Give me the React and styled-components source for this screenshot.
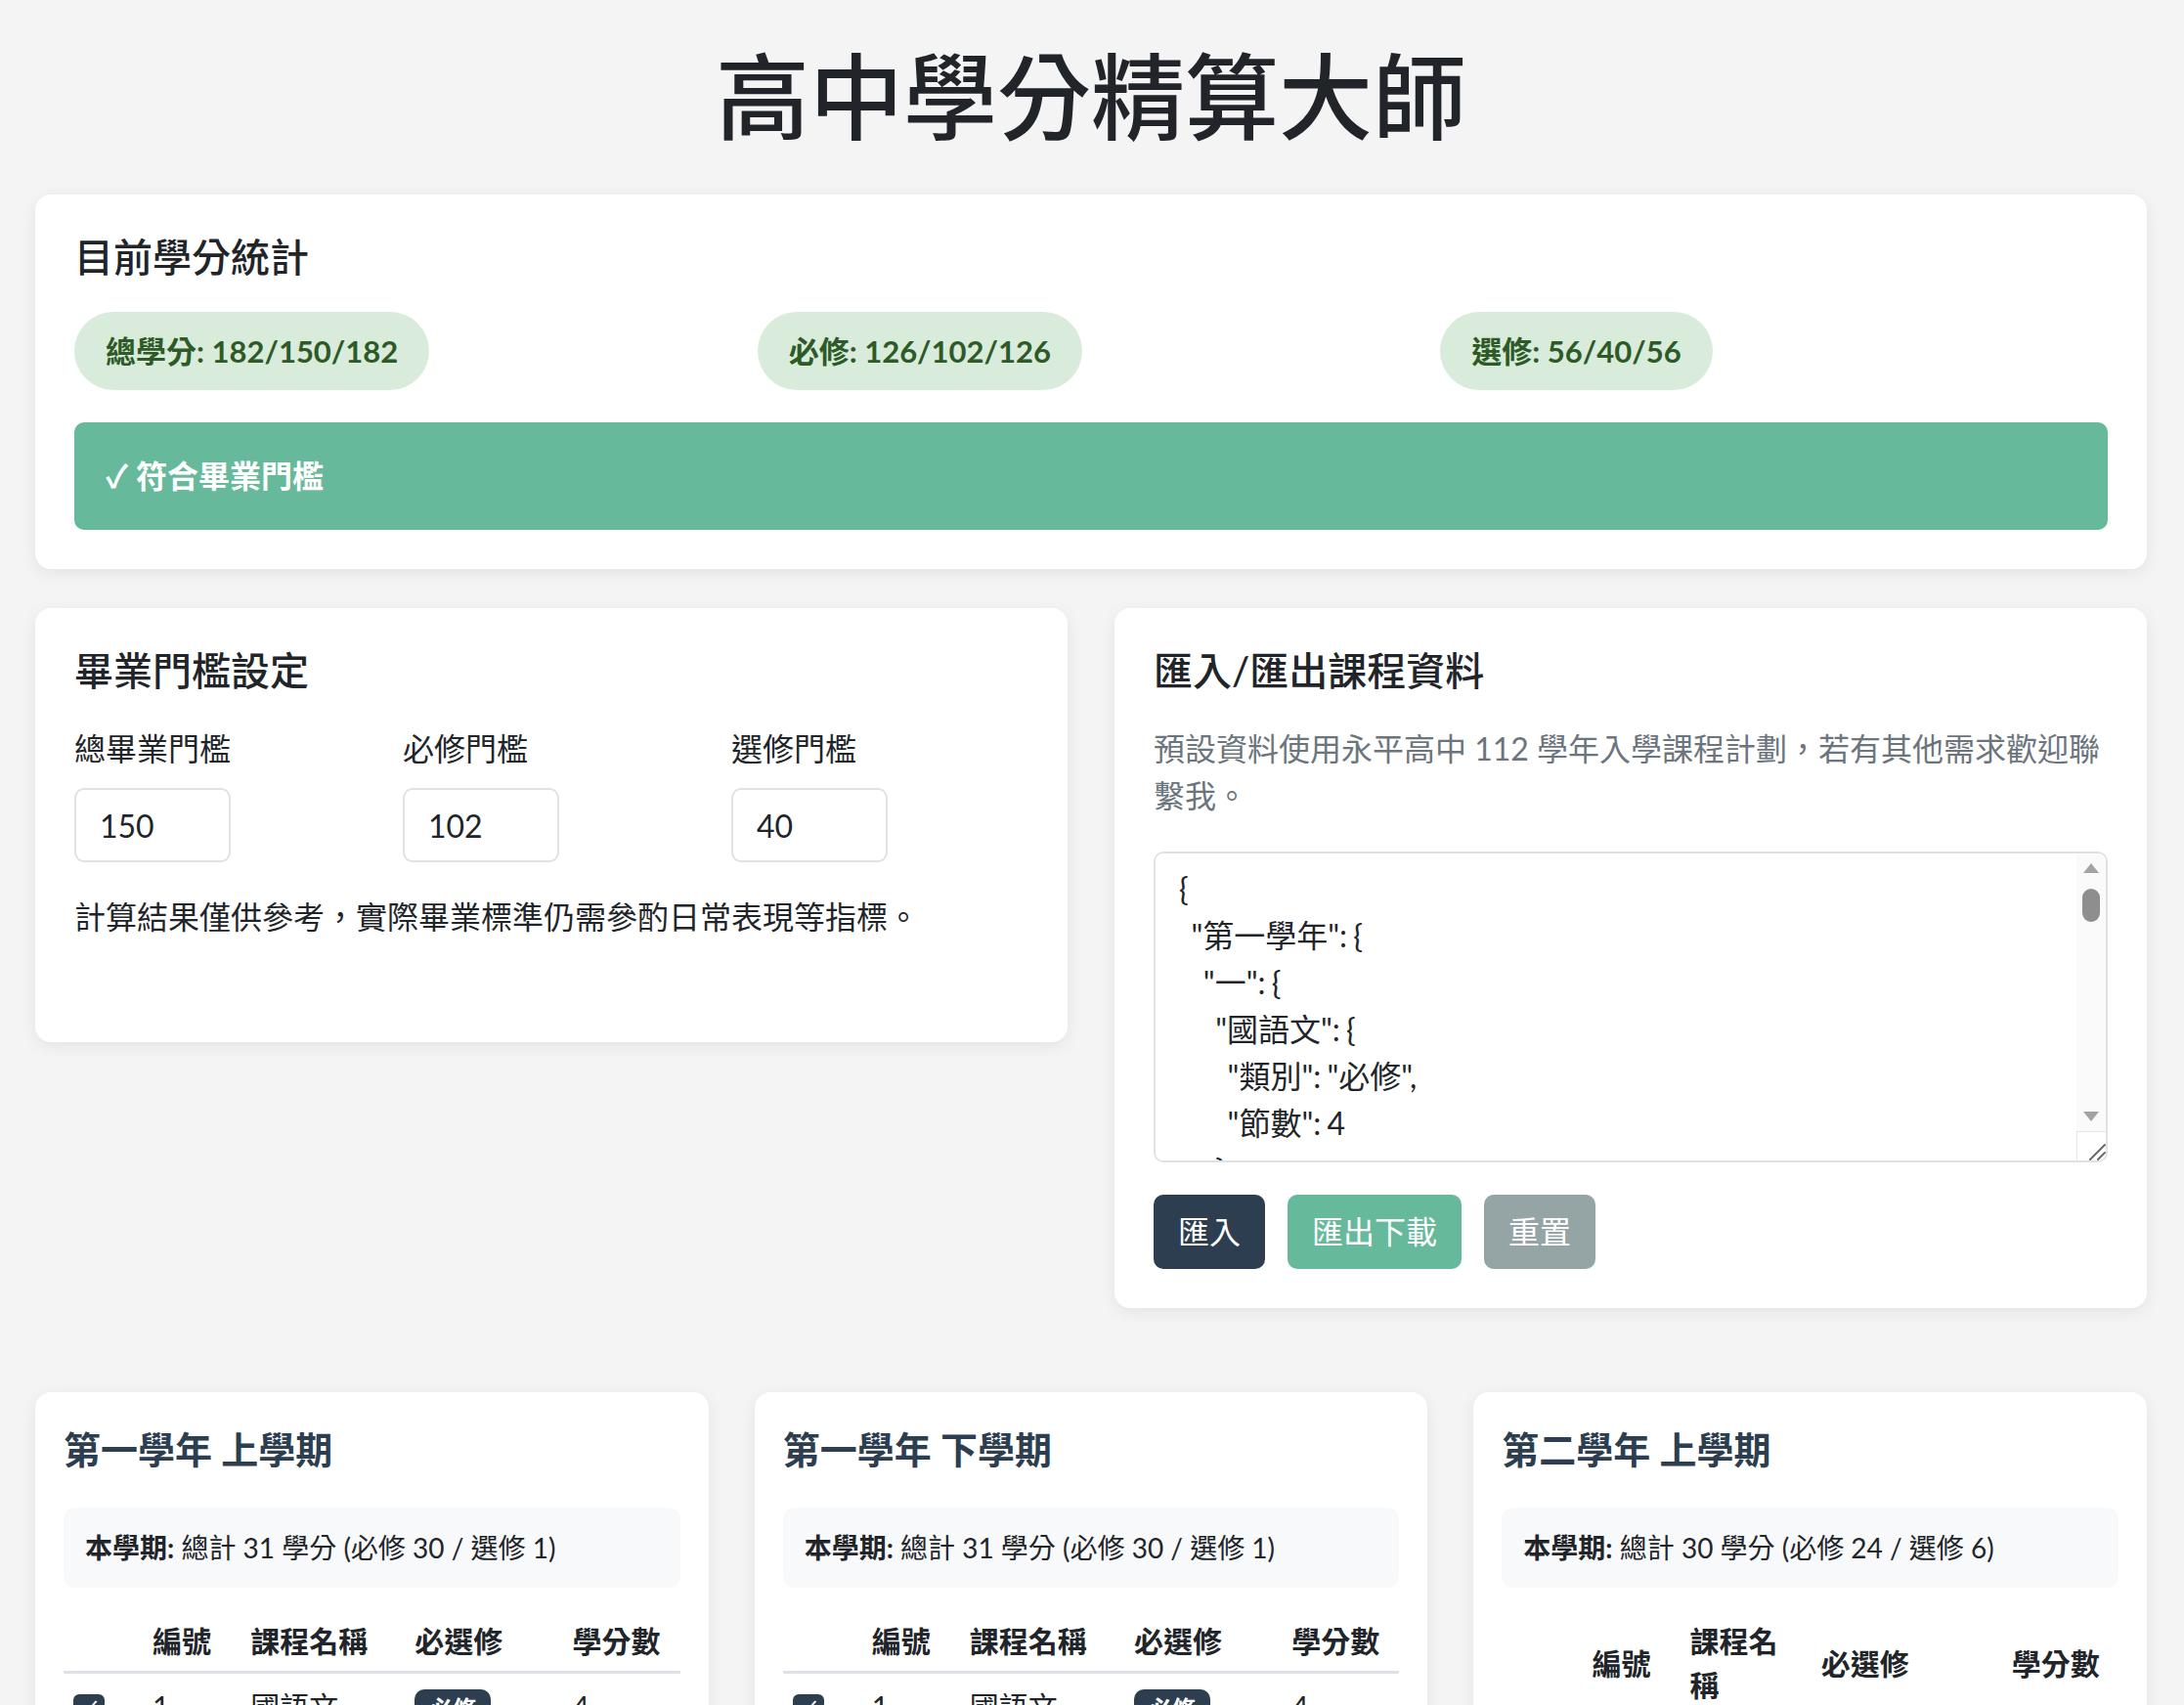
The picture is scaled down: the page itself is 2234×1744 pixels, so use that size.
import React from "react";
import styled, { createGlobalStyle } from "styled-components";

const GlobalStyle = createGlobalStyle`
  html { scrollbar-width: none; }
  body {
    margin: 0;
    background: #f4f4f4;
    font-family: Lato, "Noto Sans CJK TC", sans-serif;
    color: #212529;
  }
`;

const C = (name, type, credits) => ({ name, type, credits });

const semesters = [
  {
    year: "第一學年", term: "一", label: "第一學年 上學期", cols: [79, 100, 168, 161, 122],
    courses: [
      C("國語文", "必修", 4), C("英語文", "必修", 4), C("數學", "必修", 4), C("歷史", "必修", 2),
      C("地理", "必修", 2), C("公民與社會", "必修", 2), C("物理", "必修", 2), C("生物", "必修", 2),
      C("音樂", "必修", 1), C("美術", "必修", 1), C("生活科技", "必修", 2), C("體育", "必修", 2),
      C("健康與護理", "必修", 1), C("全民國防教育", "必修", 1), C("多元選修", "選修", 1),
    ],
  },
  {
    year: "第一學年", term: "二", label: "第一學年 下學期", cols: [79, 100, 168, 161, 122],
    courses: [
      C("國語文", "必修", 4), C("英語文", "必修", 4), C("數學", "必修", 4), C("歷史", "必修", 2),
      C("地理", "必修", 2), C("公民與社會", "必修", 2), C("化學", "必修", 2), C("地球科學", "必修", 2),
      C("音樂", "必修", 1), C("美術", "必修", 1), C("資訊科技", "必修", 2), C("體育", "必修", 2),
      C("健康與護理", "必修", 1), C("全民國防教育", "必修", 1), C("多元選修", "選修", 1),
    ],
  },
  {
    year: "第二學年", term: "一", label: "第二學年 上學期", cols: [80, 100, 134, 195, 121],
    courses: [
      C("國語文", "必修", 4), C("英語文", "必修", 4), C("數學", "必修", 4), C("歷史", "必修", 2),
      C("地理", "必修", 2), C("公民與社會", "必修", 2), C("藝術生活", "必修", 1), C("家政", "必修", 1),
      C("體育", "必修", 2), C("生命教育", "必修", 1), C("生涯規劃", "必修", 1),
      C("英文作文", "選修", 2), C("選修物理－力學一", "選修", 2), C("選修化學－物質與能量", "選修", 2),
    ],
  },
  {
    year: "第二學年", term: "二", label: "第二學年 下學期", cols: [80, 100, 134, 195, 121],
    courses: [
      C("國語文", "必修", 4), C("英語文", "必修", 4), C("數學", "必修", 4), C("歷史", "必修", 2),
      C("地理", "必修", 2), C("公民與社會", "必修", 2), C("藝術生活", "必修", 1), C("家政", "必修", 1),
      C("體育", "必修", 2), C("生命教育", "必修", 1), C("生涯規劃", "必修", 1),
      C("英語聽講", "選修", 2), C("選修物理－力學二", "選修", 2), C("選修生物－細胞與遺傳", "選修", 2),
    ],
  },
  {
    year: "第三學年", term: "一", label: "第三學年 上學期", cols: [80, 100, 134, 195, 121],
    courses: [
      C("國語文", "必修", 4), C("英語文", "必修", 4), C("體育", "必修", 2),
      C("數學甲", "選修", 4), C("選修物理－電磁現象一", "選修", 2), C("選修化學－化學反應與平衡", "選修", 4),
      C("國學常識", "選修", 2), C("英文閱讀與寫作", "選修", 2), C("探究與實作", "選修", 2), C("多元選修", "選修", 4),
    ],
  },
  {
    year: "第三學年", term: "二", label: "第三學年 下學期", cols: [80, 100, 134, 195, 121],
    courses: [
      C("國語文", "必修", 4), C("英語文", "必修", 2), C("體育", "必修", 2),
      C("數學甲", "選修", 4), C("選修物理－電磁現象二", "選修", 4), C("選修生物－生態與演化", "選修", 4),
      C("各類文學選讀", "選修", 2), C("英語會話", "選修", 2), C("專題研究", "選修", 2), C("多元選修", "選修", 4),
    ],
  },
];

const jsonData = {};
semesters.forEach((s) => {
  jsonData[s.year] = jsonData[s.year] || {};
  const t = {};
  s.courses.forEach((c) => {
    t[c.name] = { 類別: c.type, 節數: c.credits };
  });
  jsonData[s.year][s.term] = t;
});
const jsonText = JSON.stringify(jsonData, null, 2);

const Page = styled.div`
  padding: 40px 38px 80px 36px;
`;

const Title = styled.h1`
  margin: 0 0 44px;
  text-align: center;
  font-size: 96px;
  line-height: 115px;
  font-weight: 500;
  color: #212529;
`;

const Card = styled.section`
  background: #fff;
  border-radius: 16px;
  box-shadow: 0 4px 16px rgba(0, 0, 0, 0.07);
  padding: 40px;
`;

const CardTitle = styled.h2`
  margin: 0 0 32px;
  font-size: 40px;
  line-height: 48px;
  font-weight: 500;
  color: #212529;
`;

const StatGrid = styled.div`
  display: grid;
  grid-template-columns: repeat(3, 1fr);
  gap: 16px;
`;

const Pill = styled.div`
  justify-self: start;
  background: #d9ecdb;
  color: #2d5a27;
  font-weight: 700;
  font-size: 31px;
  line-height: 48px;
  padding: 16px 32px;
  border-radius: 40px;
`;

const Banner = styled.div`
  margin-top: 33px;
  background: #67b99c;
  color: #fff;
  font-weight: 700;
  font-size: 32px;
  line-height: 48px;
  padding: 31px 32px;
  border-radius: 10px;
`;

const TwoCols = styled.div`
  display: grid;
  grid-template-columns: 1fr 1fr;
  gap: 48px;
  margin-top: 40px;
  align-items: start;
`;

const FieldGrid = styled.div`
  display: grid;
  grid-template-columns: repeat(3, 1fr);
  gap: 32px;
`;

const Label = styled.label`
  display: block;
  font-size: 32px;
  line-height: 48px;
  margin-bottom: 16px;
`;

const NumberInput = styled.input`
  box-sizing: border-box;
  width: 160px;
  height: 76px;
  padding: 0 24px;
  font-family: Lato, "Noto Sans CJK TC", sans-serif;
  font-size: 32px;
  color: #212529;
  border: 2px solid #dee2e6;
  border-radius: 10px;
  background: #fff;
  outline: none;
`;

const Note = styled.p`
  margin: 32px 0 64px;
  font-size: 32px;
  line-height: 48px;
`;

const Desc = styled.p`
  margin: 0 0 33px;
  color: #6c757d;
  font-size: 32px;
  line-height: 48px;
`;

const AreaWrap = styled.div`
  position: relative;
`;

const JsonArea = styled.textarea`
  display: block;
  box-sizing: border-box;
  width: 100%;
  height: 318px;
  padding: 12px 56px 12px 24px;
  border: 2px solid #dee2e6;
  border-radius: 10px;
  font-family: Lato, "Noto Sans CJK TC", sans-serif;
  font-size: 32px;
  line-height: 48px;
  word-spacing: -2px;
  color: #212529;
  background: #fff;
  resize: none;
  outline: none;
`;

const FakeScrollbar = styled.div`
  position: absolute;
  top: 2px;
  right: 2px;
  bottom: 2px;
  width: 30px;
  display: flex;
  flex-direction: column;
  background: #fafafa;
  border-radius: 0 8px 8px 0;
  overflow: hidden;
  pointer-events: none;
`;

const ArrowBox = styled.div`
  height: 30px;
  flex: none;
  display: flex;
  align-items: center;
  justify-content: center;
`;

const Arrow = styled.span`
  width: 0;
  height: 0;
  border-left: 8px solid transparent;
  border-right: 8px solid transparent;
  ${(p) => (p.$down ? "border-top: 10px solid #a3a3a3;" : "border-bottom: 10px solid #a3a3a3;")}
`;

const Track = styled.div`
  flex: 1;
  display: flex;
  justify-content: center;
  padding-top: 6px;
`;

const Thumb = styled.div`
  width: 18px;
  height: 34px;
  border-radius: 9px;
  background: #8e8e8e;
`;

const Corner = styled.div`
  height: 30px;
  flex: none;
  box-sizing: border-box;
  background: #fff;
  border-left: 1px solid #e6e6e6;
  border-top: 1px solid #e6e6e6;
  display: flex;
  align-items: flex-end;
  justify-content: flex-end;
`;

const ButtonRow = styled.div`
  display: flex;
  gap: 23px;
  margin-top: 33px;
`;

const Button = styled.button`
  font-family: Lato, "Noto Sans CJK TC", sans-serif;
  font-size: 32px;
  line-height: 48px;
  padding: 14px 25px;
  border: none;
  border-radius: 10px;
  color: #fff;
  background: ${(p) => p.$bg};
  cursor: pointer;
`;

const SemesterGrid = styled.div`
  display: grid;
  grid-template-columns: repeat(3, 1fr);
  gap: 47px;
  margin-top: 86px;
`;

const SemesterCard = styled(Card)`
  padding: 35px 29px 32px;
`;

const SemTitle = styled.h3`
  margin: 0 0 37px;
  font-size: 38px;
  line-height: 46px;
  font-weight: 700;
  color: #2c3e50;
`;

const Summary = styled.div`
  background: #f8f9fa;
  border-radius: 12px;
  padding: 20px 22px;
  font-size: 28px;
  line-height: 42px;
  color: #212529;

  strong {
    font-weight: 700;
  }
`;

const Table = styled.table`
  width: 100%;
  margin-top: 24px;
  border-collapse: collapse;
  table-layout: fixed;
`;

const Th = styled.th`
  text-align: left;
  font-size: 30px;
  line-height: 45px;
  font-weight: 700;
  padding: 8px 12px;
  border-bottom: 3px solid #dee2e6;
  vertical-align: middle;
  color: #212529;
`;

const Td = styled.td`
  font-size: 30px;
  line-height: 45px;
  padding: 11px 12px;
  border-bottom: 2px solid #eef0f2;
  vertical-align: middle;
  color: #212529;
`;

const CheckBox = styled.span`
  display: inline-flex;
  align-items: center;
  justify-content: center;
  width: 32px;
  height: 32px;
  margin-left: -2px;
  border-radius: 6px;
  background: #2c3e50;
  color: #fff;
  font-size: 24px;
  line-height: 1;
  vertical-align: middle;
`;

const Badge = styled.span`
  display: inline-block;
  padding: 2px 15px;
  border-radius: 10px;
  font-size: 24px;
  line-height: 36px;
  font-weight: 700;
  color: #fff;
  background: ${(p) => (p.$elective ? "#67b99c" : "#2c3e50")};
`;

function SemesterPanel({ sem }) {
  const req = sem.courses.filter((c) => c.type === "必修").reduce((a, c) => a + c.credits, 0);
  const ele = sem.courses.filter((c) => c.type === "選修").reduce((a, c) => a + c.credits, 0);
  return (
    <SemesterCard>
      <SemTitle>{sem.label}</SemTitle>
      <Summary>
        <strong>本學期:</strong> 總計 {req + ele} 學分 (必修 {req} / 選修 {ele})
      </Summary>
      <Table>
        <colgroup>
          {sem.cols.map((w, i) => (
            <col key={i} style={{ width: w }} />
          ))}
        </colgroup>
        <thead>
          <tr>
            <Th></Th>
            <Th>編號</Th>
            <Th>課程名稱</Th>
            <Th>必選修</Th>
            <Th>學分數</Th>
          </tr>
        </thead>
        <tbody>
          {sem.courses.map((c, i) => (
            <tr key={c.name + i}>
              <Td>
                <CheckBox>✓</CheckBox>
              </Td>
              <Td>{i + 1}</Td>
              <Td>{c.name}</Td>
              <Td>
                <Badge $elective={c.type === "選修"}>{c.type}</Badge>
              </Td>
              <Td>{c.credits}</Td>
            </tr>
          ))}
        </tbody>
      </Table>
    </SemesterCard>
  );
}

export default function App() {
  return (
    <Page>
      <GlobalStyle />
      <Title>高中學分精算大師</Title>

      <Card>
        <CardTitle>目前學分統計</CardTitle>
        <StatGrid>
          <Pill>總學分: 182/150/182</Pill>
          <Pill>必修: 126/102/126</Pill>
          <Pill>選修: 56/40/56</Pill>
        </StatGrid>
        <Banner>✓ 符合畢業門檻</Banner>
      </Card>

      <TwoCols>
        <Card>
          <CardTitle>畢業門檻設定</CardTitle>
          <FieldGrid>
            <div>
              <Label>總畢業門檻</Label>
              <NumberInput type="number" defaultValue={150} />
            </div>
            <div>
              <Label>必修門檻</Label>
              <NumberInput type="number" defaultValue={102} />
            </div>
            <div>
              <Label>選修門檻</Label>
              <NumberInput type="number" defaultValue={40} />
            </div>
          </FieldGrid>
          <Note>計算結果僅供參考，實際畢業標準仍需參酌日常表現等指標。</Note>
        </Card>

        <Card>
          <CardTitle>匯入/匯出課程資料</CardTitle>
          <Desc>預設資料使用永平高中 112 學年入學課程計劃，若有其他需求歡迎聯繫我。</Desc>
          <AreaWrap>
            <JsonArea defaultValue={jsonText} spellCheck={false} />
            <FakeScrollbar aria-hidden="true">
              <ArrowBox>
                <Arrow />
              </ArrowBox>
              <Track>
                <Thumb />
              </Track>
              <ArrowBox>
                <Arrow $down />
              </ArrowBox>
              <Corner>
                <svg width="28" height="28" viewBox="0 0 28 28">
                  <path d="M12 27 L27 12 M20 27 L27 20" stroke="#6b6b6b" strokeWidth="2" strokeLinecap="round" />
                </svg>
              </Corner>
            </FakeScrollbar>
          </AreaWrap>
          <ButtonRow>
            <Button $bg="#2c3e50">匯入</Button>
            <Button $bg="#67b99c">匯出下載</Button>
            <Button $bg="#95a5a6">重置</Button>
          </ButtonRow>
        </Card>
      </TwoCols>

      <SemesterGrid>
        {semesters.map((s) => (
          <SemesterPanel key={s.label} sem={s} />
        ))}
      </SemesterGrid>
    </Page>
  );
}
